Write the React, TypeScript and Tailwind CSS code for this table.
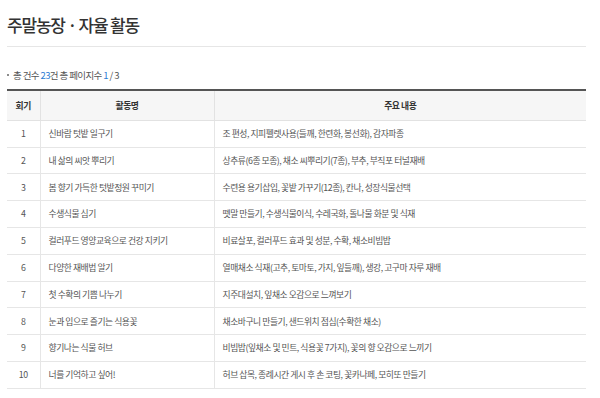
const rows: [number, string, string][] = [
  [1, "신바람 텃밭 일구기", "조 편성, 지피펠렛사용(들깨, 한련화, 봉선화), 감자파종"],
  [2, "내 삶의 씨앗 뿌리기", "상추류(6종 모종), 채소 씨뿌리기(7종), 부추, 부직포 터널재배"],
  [3, "봄 향기 가득한 텃밭정원 꾸미기", "수련용 용기삽입, 꽃밭 가꾸기(12종), 칸나, 성장식물선택"],
  [4, "수생식물 심기", "뗏말 만들기, 수생식물이식, 수레국화, 돌나물 화분 및 식재"],
  [5, "컬러푸드 영양교육으로 건강 지키기", "비료살포, 컬러푸드 효과 및 성분, 수확, 채소비빔밥"],
  [6, "다양한 재배법 알기", "열매채소 식재(고추, 토마토, 가지, 잎들깨), 생강, 고구마 자루 재배"],
  [7, "첫 수확의 기쁨 나누기", "지주대설치, 잎채소 오감으로 느껴보기"],
  [8, "눈과 입으로 즐기는 식용꽃", "채소바구니 만들기, 샌드위치 점심(수확한 채소)"],
  [9, "향기나는 식물 허브", "비빔밥(잎채소 및 민트, 식용꽃 7가지), 꽃의 향 오감으로 느끼기"],
  [10, "너를 기억하고 싶어!", "허브 삽목, 종례시간 게시 후 손 코팅, 꽃카나페, 모히또 만들기"],
];

export default function App() {
  return (
    <main
      className="min-h-screen bg-white px-[7px] pt-[13px] text-[#555]"
      style={{ fontFamily: '"Noto Sans CJK KR", "Noto Sans", sans-serif' }}
    >
      <div className="w-[579px]">
        <h1 className="text-[17px] font-medium leading-[24px] tracking-[-1.2px] text-[#333]">
          주말농장 · 자율 활동
        </h1>
        <div className="mt-[9px] h-px bg-[#e6e6e6]" />

        <div className="mt-[21px] flex items-center gap-[4px] text-[9.5px] tracking-[-0.6px] text-[#555]">
          <span className="h-[2px] w-[2px] rounded-full bg-[#666]" />
          <span>
            총 건수 <span className="text-[#2b7bd3]">23</span>건 총 페이지수{" "}
            <span className="text-[#2b7bd3]">1</span> / 3
          </span>
        </div>

        <table className="mt-[7px] w-full border-collapse border-t-2 border-[#555] text-[8.8px] tracking-[-0.45px]">
          <thead>
            <tr className="h-[30px] border-b border-[#e2e2e2] bg-[#f6f6f6] text-[#333]">
              <th className="w-[33px] border-r border-[#e2e2e2] font-bold">회기</th>
              <th className="w-[174px] border-r border-[#e2e2e2] font-bold">활동명</th>
              <th className="font-bold">주요 내용</th>
            </tr>
          </thead>
          <tbody>
            {rows.map(([n, name, desc]) => (
              <tr key={n} className="h-[26.8px] border-b border-[#e6e6e6]">
                <td className="border-r border-[#e6e6e6] text-center">{n}</td>
                <td className="border-r border-[#e6e6e6] pl-[8px]">{name}</td>
                <td className="pl-[8px]">{desc}</td>
              </tr>
            ))}
          </tbody>
        </table>
      </div>
    </main>
  );
}
